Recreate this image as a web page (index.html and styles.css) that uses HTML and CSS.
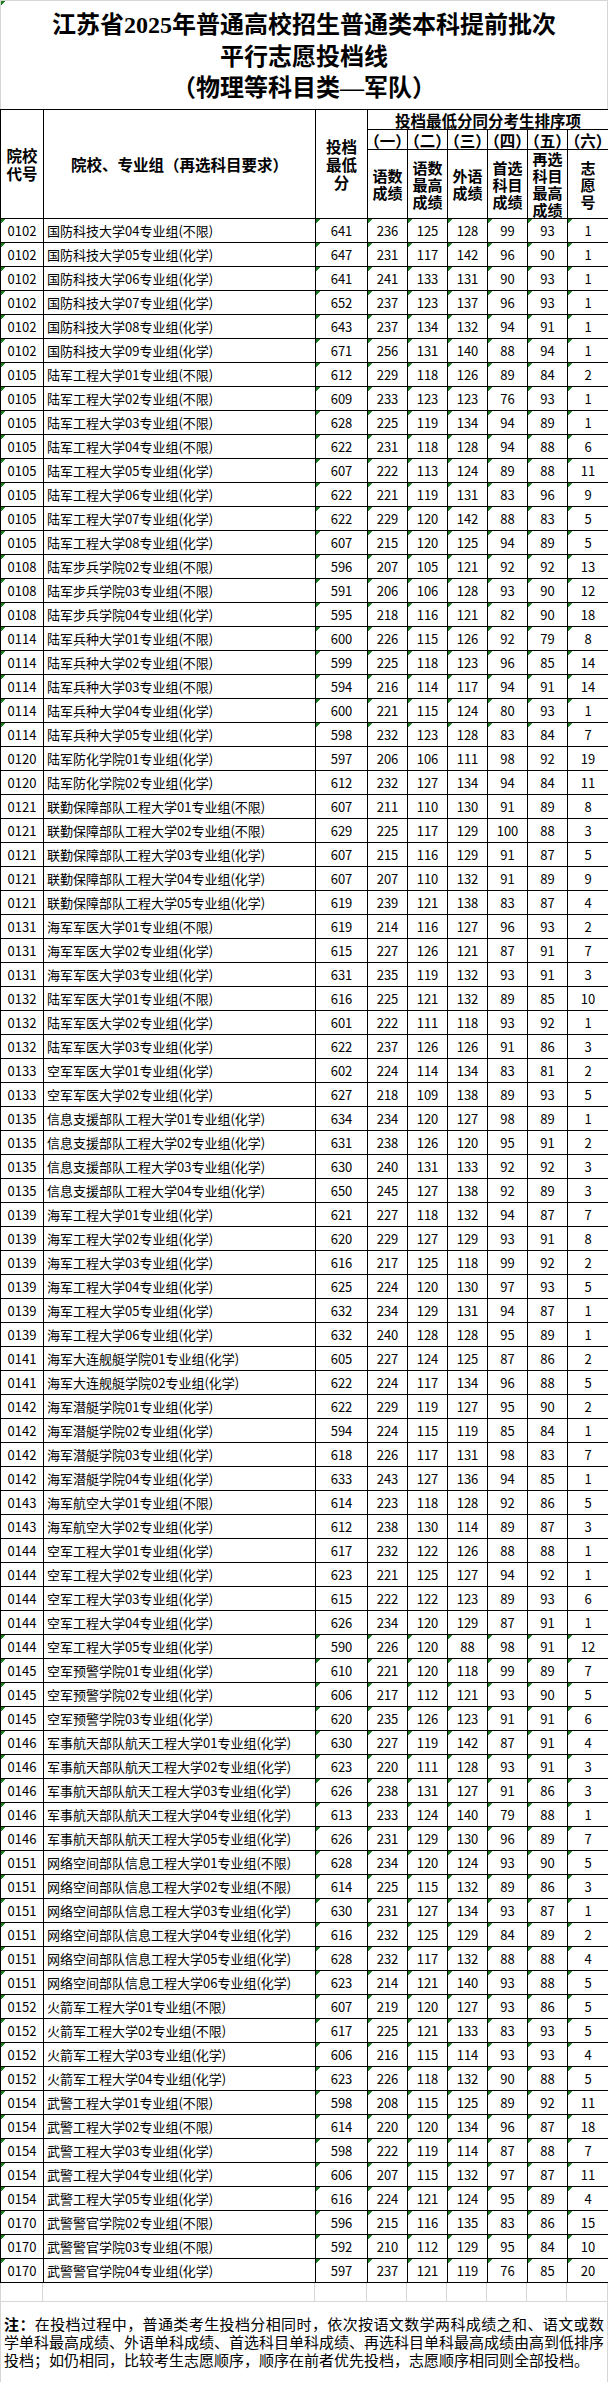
FILE: index.html
```html
<!DOCTYPE html>
<html lang="zh-CN">
<head>
<meta charset="utf-8">
<title>江苏省2025年普通高校招生普通类本科提前批次平行志愿投档线</title>
<link rel="stylesheet" href="styles.css">
</head>
<body>
<div class="sheet">
  <div class="title mark">
    <p>江苏省2025年普通高校招生普通类本科提前批次</p>
    <p>平行志愿投档线</p>
    <p>（物理等科目类—军队）</p>
  </div>
  <table class="grid">
    <colgroup>
      <col class="w-code"><col class="w-name"><col class="w-score">
      <col class="w-s"><col class="w-s"><col class="w-s"><col class="w-s"><col class="w-s"><col class="w-last">
    </colgroup>
    <thead>
      <tr class="h1">
        <th rowspan="3">院校<br>代号</th>
        <th rowspan="3">院校、专业组（再选科目要求）</th>
        <th rowspan="3">投档<br>最低<br>分</th>
        <th colspan="6">投档最低分同分考生排序项</th>
      </tr>
      <tr class="h2">
        <th class="num">（一）</th><th class="num">（二）</th><th class="num">（三）</th><th class="num">（四）</th><th class="num">（五）</th><th class="num">（六）</th>
      </tr>
      <tr class="h3">
        <th class="lbl">语数<br>成绩</th>
        <th class="lbl">语数<br>最高<br>成绩</th>
        <th class="lbl">外语<br>成绩</th>
        <th class="lbl">首选<br>科目<br>成绩</th>
        <th class="lbl">再选<br>科目<br>最高<br>成绩</th>
        <th class="lbl">志<br>愿<br>号</th>
      </tr>
    </thead>
    <tbody>
      <tr class="m"><td>0102</td><td class="n">国防科技大学04专业组(不限)</td><td>641</td><td>236</td><td>125</td><td>128</td><td>99</td><td>93</td><td>1</td></tr>
      <tr class="m"><td>0102</td><td class="n">国防科技大学05专业组(化学)</td><td>647</td><td>231</td><td>117</td><td>142</td><td>96</td><td>90</td><td>1</td></tr>
      <tr class="m"><td>0102</td><td class="n">国防科技大学06专业组(化学)</td><td>641</td><td>241</td><td>133</td><td>131</td><td>90</td><td>93</td><td>1</td></tr>
      <tr class="m"><td>0102</td><td class="n">国防科技大学07专业组(化学)</td><td>652</td><td>237</td><td>123</td><td>137</td><td>96</td><td>93</td><td>1</td></tr>
      <tr class="m"><td>0102</td><td class="n">国防科技大学08专业组(化学)</td><td>643</td><td>237</td><td>134</td><td>132</td><td>94</td><td>91</td><td>1</td></tr>
      <tr class="m"><td>0102</td><td class="n">国防科技大学09专业组(化学)</td><td>671</td><td>256</td><td>131</td><td>140</td><td>88</td><td>94</td><td>1</td></tr>
      <tr class="m"><td>0105</td><td class="n">陆军工程大学01专业组(不限)</td><td>612</td><td>229</td><td>118</td><td>126</td><td>89</td><td>84</td><td>2</td></tr>
      <tr class="m"><td>0105</td><td class="n">陆军工程大学02专业组(不限)</td><td>609</td><td>233</td><td>123</td><td>123</td><td>76</td><td>93</td><td>1</td></tr>
      <tr class="m"><td>0105</td><td class="n">陆军工程大学03专业组(不限)</td><td>628</td><td>225</td><td>119</td><td>134</td><td>94</td><td>89</td><td>1</td></tr>
      <tr class="m"><td>0105</td><td class="n">陆军工程大学04专业组(不限)</td><td>622</td><td>231</td><td>118</td><td>128</td><td>94</td><td>88</td><td>6</td></tr>
      <tr class="m"><td>0105</td><td class="n">陆军工程大学05专业组(化学)</td><td>607</td><td>222</td><td>113</td><td>124</td><td>89</td><td>88</td><td>11</td></tr>
      <tr class="m"><td>0105</td><td class="n">陆军工程大学06专业组(化学)</td><td>622</td><td>221</td><td>119</td><td>131</td><td>83</td><td>96</td><td>9</td></tr>
      <tr class="m"><td>0105</td><td class="n">陆军工程大学07专业组(化学)</td><td>622</td><td>229</td><td>120</td><td>142</td><td>88</td><td>83</td><td>5</td></tr>
      <tr class="m"><td>0105</td><td class="n">陆军工程大学08专业组(化学)</td><td>607</td><td>215</td><td>120</td><td>125</td><td>94</td><td>89</td><td>5</td></tr>
      <tr class="m"><td>0108</td><td class="n">陆军步兵学院02专业组(不限)</td><td>596</td><td>207</td><td>105</td><td>121</td><td>92</td><td>92</td><td>13</td></tr>
      <tr class="m"><td>0108</td><td class="n">陆军步兵学院03专业组(不限)</td><td>591</td><td>206</td><td>106</td><td>128</td><td>93</td><td>90</td><td>12</td></tr>
      <tr class="m"><td>0108</td><td class="n">陆军步兵学院04专业组(化学)</td><td>595</td><td>218</td><td>116</td><td>121</td><td>82</td><td>90</td><td>18</td></tr>
      <tr class="m"><td>0114</td><td class="n">陆军兵种大学01专业组(不限)</td><td>600</td><td>226</td><td>115</td><td>126</td><td>92</td><td>79</td><td>8</td></tr>
      <tr class="m"><td>0114</td><td class="n">陆军兵种大学02专业组(不限)</td><td>599</td><td>225</td><td>118</td><td>123</td><td>96</td><td>85</td><td>14</td></tr>
      <tr class="m"><td>0114</td><td class="n">陆军兵种大学03专业组(不限)</td><td>594</td><td>216</td><td>114</td><td>117</td><td>94</td><td>91</td><td>14</td></tr>
      <tr class="m"><td>0114</td><td class="n">陆军兵种大学04专业组(化学)</td><td>600</td><td>221</td><td>115</td><td>124</td><td>80</td><td>93</td><td>1</td></tr>
      <tr class="m"><td>0114</td><td class="n">陆军兵种大学05专业组(化学)</td><td>598</td><td>232</td><td>123</td><td>128</td><td>83</td><td>84</td><td>7</td></tr>
      <tr><td>0120</td><td class="n">陆军防化学院01专业组(化学)</td><td>597</td><td>206</td><td>106</td><td>111</td><td>98</td><td>92</td><td>19</td></tr>
      <tr><td>0120</td><td class="n">陆军防化学院02专业组(化学)</td><td>612</td><td>232</td><td>127</td><td>134</td><td>94</td><td>84</td><td>11</td></tr>
      <tr><td>0121</td><td class="n">联勤保障部队工程大学01专业组(不限)</td><td>607</td><td>211</td><td>110</td><td>130</td><td>91</td><td>89</td><td>8</td></tr>
      <tr><td>0121</td><td class="n">联勤保障部队工程大学02专业组(不限)</td><td>629</td><td>225</td><td>117</td><td>129</td><td>100</td><td>88</td><td>3</td></tr>
      <tr><td>0121</td><td class="n">联勤保障部队工程大学03专业组(化学)</td><td>607</td><td>215</td><td>116</td><td>129</td><td>91</td><td>87</td><td>5</td></tr>
      <tr><td>0121</td><td class="n">联勤保障部队工程大学04专业组(化学)</td><td>607</td><td>207</td><td>110</td><td>132</td><td>91</td><td>89</td><td>9</td></tr>
      <tr><td>0121</td><td class="n">联勤保障部队工程大学05专业组(化学)</td><td>619</td><td>239</td><td>121</td><td>138</td><td>83</td><td>87</td><td>4</td></tr>
      <tr><td>0131</td><td class="n">海军军医大学01专业组(不限)</td><td>619</td><td>214</td><td>116</td><td>127</td><td>96</td><td>93</td><td>2</td></tr>
      <tr><td>0131</td><td class="n">海军军医大学02专业组(化学)</td><td>615</td><td>227</td><td>126</td><td>121</td><td>87</td><td>91</td><td>7</td></tr>
      <tr><td>0131</td><td class="n">海军军医大学03专业组(化学)</td><td>631</td><td>235</td><td>119</td><td>132</td><td>93</td><td>91</td><td>3</td></tr>
      <tr><td>0132</td><td class="n">陆军军医大学01专业组(不限)</td><td>616</td><td>225</td><td>121</td><td>132</td><td>89</td><td>85</td><td>10</td></tr>
      <tr><td>0132</td><td class="n">陆军军医大学02专业组(化学)</td><td>601</td><td>222</td><td>111</td><td>118</td><td>93</td><td>92</td><td>1</td></tr>
      <tr><td>0132</td><td class="n">陆军军医大学03专业组(化学)</td><td>622</td><td>237</td><td>126</td><td>126</td><td>91</td><td>86</td><td>3</td></tr>
      <tr><td>0133</td><td class="n">空军军医大学01专业组(化学)</td><td>602</td><td>224</td><td>114</td><td>134</td><td>83</td><td>81</td><td>2</td></tr>
      <tr><td>0133</td><td class="n">空军军医大学02专业组(化学)</td><td>627</td><td>218</td><td>109</td><td>138</td><td>89</td><td>93</td><td>5</td></tr>
      <tr><td>0135</td><td class="n">信息支援部队工程大学01专业组(化学)</td><td>634</td><td>234</td><td>120</td><td>127</td><td>98</td><td>89</td><td>1</td></tr>
      <tr><td>0135</td><td class="n">信息支援部队工程大学02专业组(化学)</td><td>631</td><td>238</td><td>126</td><td>120</td><td>95</td><td>91</td><td>2</td></tr>
      <tr><td>0135</td><td class="n">信息支援部队工程大学03专业组(化学)</td><td>630</td><td>240</td><td>131</td><td>133</td><td>92</td><td>92</td><td>3</td></tr>
      <tr><td>0135</td><td class="n">信息支援部队工程大学04专业组(化学)</td><td>650</td><td>245</td><td>127</td><td>138</td><td>92</td><td>89</td><td>3</td></tr>
      <tr><td>0139</td><td class="n">海军工程大学01专业组(化学)</td><td>621</td><td>227</td><td>118</td><td>132</td><td>94</td><td>87</td><td>7</td></tr>
      <tr><td>0139</td><td class="n">海军工程大学02专业组(化学)</td><td>620</td><td>229</td><td>127</td><td>129</td><td>93</td><td>91</td><td>8</td></tr>
      <tr><td>0139</td><td class="n">海军工程大学03专业组(化学)</td><td>616</td><td>217</td><td>125</td><td>118</td><td>99</td><td>92</td><td>2</td></tr>
      <tr><td>0139</td><td class="n">海军工程大学04专业组(化学)</td><td>625</td><td>224</td><td>120</td><td>130</td><td>97</td><td>93</td><td>5</td></tr>
      <tr><td>0139</td><td class="n">海军工程大学05专业组(化学)</td><td>632</td><td>234</td><td>129</td><td>131</td><td>94</td><td>87</td><td>1</td></tr>
      <tr><td>0139</td><td class="n">海军工程大学06专业组(化学)</td><td>632</td><td>240</td><td>128</td><td>128</td><td>95</td><td>89</td><td>1</td></tr>
      <tr><td>0141</td><td class="n">海军大连舰艇学院01专业组(化学)</td><td>605</td><td>227</td><td>124</td><td>125</td><td>87</td><td>86</td><td>2</td></tr>
      <tr><td>0141</td><td class="n">海军大连舰艇学院02专业组(化学)</td><td>622</td><td>224</td><td>117</td><td>134</td><td>96</td><td>88</td><td>5</td></tr>
      <tr><td>0142</td><td class="n">海军潜艇学院01专业组(化学)</td><td>622</td><td>229</td><td>119</td><td>127</td><td>95</td><td>90</td><td>2</td></tr>
      <tr><td>0142</td><td class="n">海军潜艇学院02专业组(化学)</td><td>594</td><td>224</td><td>115</td><td>119</td><td>85</td><td>84</td><td>1</td></tr>
      <tr><td>0142</td><td class="n">海军潜艇学院03专业组(化学)</td><td>618</td><td>226</td><td>117</td><td>131</td><td>98</td><td>83</td><td>7</td></tr>
      <tr><td>0142</td><td class="n">海军潜艇学院04专业组(化学)</td><td>633</td><td>243</td><td>127</td><td>136</td><td>94</td><td>85</td><td>1</td></tr>
      <tr><td>0143</td><td class="n">海军航空大学01专业组(不限)</td><td>614</td><td>223</td><td>118</td><td>128</td><td>92</td><td>86</td><td>5</td></tr>
      <tr><td>0143</td><td class="n">海军航空大学02专业组(化学)</td><td>612</td><td>238</td><td>130</td><td>114</td><td>89</td><td>87</td><td>3</td></tr>
      <tr><td>0144</td><td class="n">空军工程大学01专业组(化学)</td><td>617</td><td>232</td><td>122</td><td>126</td><td>88</td><td>88</td><td>1</td></tr>
      <tr><td>0144</td><td class="n">空军工程大学02专业组(化学)</td><td>623</td><td>221</td><td>125</td><td>127</td><td>94</td><td>92</td><td>1</td></tr>
      <tr><td>0144</td><td class="n">空军工程大学03专业组(化学)</td><td>615</td><td>222</td><td>122</td><td>123</td><td>89</td><td>93</td><td>6</td></tr>
      <tr><td>0144</td><td class="n">空军工程大学04专业组(化学)</td><td>626</td><td>234</td><td>120</td><td>129</td><td>87</td><td>91</td><td>1</td></tr>
      <tr class="m"><td>0144</td><td class="n">空军工程大学05专业组(化学)</td><td>590</td><td>226</td><td>120</td><td>88</td><td>98</td><td>91</td><td>12</td></tr>
      <tr class="m"><td>0145</td><td class="n">空军预警学院01专业组(化学)</td><td>610</td><td>221</td><td>120</td><td>118</td><td>99</td><td>89</td><td>7</td></tr>
      <tr class="m"><td>0145</td><td class="n">空军预警学院02专业组(化学)</td><td>606</td><td>217</td><td>112</td><td>121</td><td>93</td><td>90</td><td>5</td></tr>
      <tr class="m"><td>0145</td><td class="n">空军预警学院03专业组(化学)</td><td>620</td><td>235</td><td>126</td><td>123</td><td>91</td><td>91</td><td>6</td></tr>
      <tr class="m"><td>0146</td><td class="n">军事航天部队航天工程大学01专业组(化学)</td><td>630</td><td>227</td><td>119</td><td>142</td><td>87</td><td>91</td><td>4</td></tr>
      <tr class="m"><td>0146</td><td class="n">军事航天部队航天工程大学02专业组(化学)</td><td>623</td><td>220</td><td>111</td><td>128</td><td>93</td><td>91</td><td>3</td></tr>
      <tr class="m"><td>0146</td><td class="n">军事航天部队航天工程大学03专业组(化学)</td><td>626</td><td>238</td><td>131</td><td>127</td><td>91</td><td>86</td><td>3</td></tr>
      <tr class="m"><td>0146</td><td class="n">军事航天部队航天工程大学04专业组(化学)</td><td>613</td><td>233</td><td>124</td><td>140</td><td>79</td><td>88</td><td>1</td></tr>
      <tr class="m"><td>0146</td><td class="n">军事航天部队航天工程大学05专业组(化学)</td><td>626</td><td>231</td><td>129</td><td>130</td><td>96</td><td>89</td><td>7</td></tr>
      <tr class="m"><td>0151</td><td class="n">网络空间部队信息工程大学01专业组(不限)</td><td>628</td><td>234</td><td>120</td><td>124</td><td>93</td><td>90</td><td>5</td></tr>
      <tr class="m"><td>0151</td><td class="n">网络空间部队信息工程大学02专业组(不限)</td><td>614</td><td>225</td><td>115</td><td>132</td><td>89</td><td>86</td><td>3</td></tr>
      <tr class="m"><td>0151</td><td class="n">网络空间部队信息工程大学03专业组(化学)</td><td>630</td><td>231</td><td>127</td><td>134</td><td>93</td><td>87</td><td>1</td></tr>
      <tr class="m"><td>0151</td><td class="n">网络空间部队信息工程大学04专业组(化学)</td><td>616</td><td>232</td><td>125</td><td>129</td><td>84</td><td>89</td><td>2</td></tr>
      <tr class="m"><td>0151</td><td class="n">网络空间部队信息工程大学05专业组(化学)</td><td>628</td><td>232</td><td>117</td><td>132</td><td>88</td><td>88</td><td>4</td></tr>
      <tr class="m"><td>0151</td><td class="n">网络空间部队信息工程大学06专业组(化学)</td><td>623</td><td>214</td><td>121</td><td>140</td><td>93</td><td>88</td><td>5</td></tr>
      <tr class="m"><td>0152</td><td class="n">火箭军工程大学01专业组(不限)</td><td>607</td><td>219</td><td>120</td><td>127</td><td>93</td><td>86</td><td>5</td></tr>
      <tr class="m"><td>0152</td><td class="n">火箭军工程大学02专业组(不限)</td><td>617</td><td>225</td><td>121</td><td>133</td><td>83</td><td>93</td><td>5</td></tr>
      <tr class="m"><td>0152</td><td class="n">火箭军工程大学03专业组(化学)</td><td>606</td><td>216</td><td>115</td><td>114</td><td>93</td><td>93</td><td>4</td></tr>
      <tr class="m"><td>0152</td><td class="n">火箭军工程大学04专业组(化学)</td><td>623</td><td>226</td><td>118</td><td>132</td><td>90</td><td>88</td><td>5</td></tr>
      <tr class="m"><td>0154</td><td class="n">武警工程大学01专业组(不限)</td><td>598</td><td>208</td><td>115</td><td>125</td><td>89</td><td>92</td><td>11</td></tr>
      <tr class="m"><td>0154</td><td class="n">武警工程大学02专业组(不限)</td><td>614</td><td>220</td><td>120</td><td>134</td><td>96</td><td>87</td><td>18</td></tr>
      <tr class="m"><td>0154</td><td class="n">武警工程大学03专业组(化学)</td><td>598</td><td>222</td><td>119</td><td>114</td><td>87</td><td>88</td><td>7</td></tr>
      <tr class="m"><td>0154</td><td class="n">武警工程大学04专业组(化学)</td><td>606</td><td>207</td><td>115</td><td>132</td><td>97</td><td>87</td><td>11</td></tr>
      <tr class="m"><td>0154</td><td class="n">武警工程大学05专业组(化学)</td><td>616</td><td>224</td><td>121</td><td>124</td><td>95</td><td>89</td><td>4</td></tr>
      <tr class="m"><td>0170</td><td class="n">武警警官学院02专业组(不限)</td><td>596</td><td>215</td><td>116</td><td>135</td><td>83</td><td>86</td><td>15</td></tr>
      <tr class="m"><td>0170</td><td class="n">武警警官学院03专业组(不限)</td><td>592</td><td>210</td><td>112</td><td>129</td><td>95</td><td>84</td><td>10</td></tr>
      <tr class="m"><td>0170</td><td class="n">武警警官学院04专业组(化学)</td><td>597</td><td>237</td><td>121</td><td>119</td><td>76</td><td>85</td><td>20</td></tr>
    </tbody>
  </table>
  <div class="blank"><span></span><span></span><span></span><span></span><span></span><span></span><span></span><span></span><span></span></div>
  <div class="note">
    <span class="ln"><b>注：</b>在投档过程中，普通类考生投档分相同时，依次按语文数学两科成绩之和、语文或数</span>
    <span class="ln">学单科最高成绩、外语单科成绩、首选科目单科成绩、再选科目单科最高成绩由高到低排序</span>
    <span class="ln last">投档；如仍相同，比较考生志愿顺序，顺序在前者优先投档，志愿顺序相同则全部投档。</span>
  </div>
</div>
</body>
</html>
```

FILE: styles.css
```css
* { box-sizing: border-box; }

body {
  margin: 0;
  background: #fff;
  color: #000;
  font-family: "Noto Sans CJK SC", sans-serif;
}

.sheet {
  width: 608px;
}

.mark {
  background: linear-gradient(135deg, #1d7f1d 2.9px, transparent 2.9px) 0 0 / 6px 6px no-repeat;
}

.title {
  height: 109px;
  padding-top: 9px;
  border-top: 1px solid #d6d6d6;
  border-left: 1px solid #d6d6d6;
  border-right: 1px solid #d6d6d6;
  text-align: center;
  font-family: "Liberation Serif", "Noto Sans CJK SC", serif;
  font-weight: 700;
  font-size: 24px;
  line-height: 31.5px;
}

.title p { margin: 0; }

.grid {
  width: 608px;
  table-layout: fixed;
  border-collapse: collapse;
}

.w-code { width: 43px; }
.w-name { width: 272px; }
.w-score { width: 52px; }
.w-s { width: 40px; }
.w-last { width: 41px; }

.grid th,
.grid td {
  border: 1px solid #000;
  padding: 0;
  text-align: center;
  vertical-align: middle;
  white-space: nowrap;
}

.grid td { overflow: hidden; }

.grid th {
  font-weight: 700;
  font-size: 15.5px;
  line-height: 18px;
}

.h1 { height: 20px; }
.h2 { height: 20px; }
.h3 { height: 69px; }

.grid th.num {
  font-feature-settings: "halt";
  font-size: 15.5px;
}

.grid th.lbl {
  font-size: 15px;
  line-height: 17px;
}

.grid tbody tr { height: 24px; }

.grid td {
  font-size: 13px;
  line-height: 22px;
}

.grid td.n {
  text-align: left;
  padding-left: 3px;
}

.m td {
  background: linear-gradient(135deg, #1d7f1d 2.9px, transparent 2.9px) 0 0 / 6px 6px no-repeat;
}

.m td.n { background: none; }

.blank {
  display: grid;
  grid-template-columns: 43px 272px 52px 40px 40px 40px 40px 40px 41px;
  height: 19px;
  border-bottom: 1px solid #d6d6d6;
}

.blank span { border-right: 1px solid #d6d6d6; }
.blank span:first-child { border-left: 1px solid #d6d6d6; }

.note {
  height: 81px;
  padding: 13px 3px 0 3px;
  border-left: 1px solid #d6d6d6;
  border-right: 1px solid #d6d6d6;
  border-bottom: 1px solid #d6d6d6;
  font-size: 15px;
  line-height: 18px;
}

.note .ln {
  display: block;
  text-align: justify;
  text-align-last: justify;
}

.note .ln.last { text-align-last: left; }

.note b { font-weight: 700; }
```
